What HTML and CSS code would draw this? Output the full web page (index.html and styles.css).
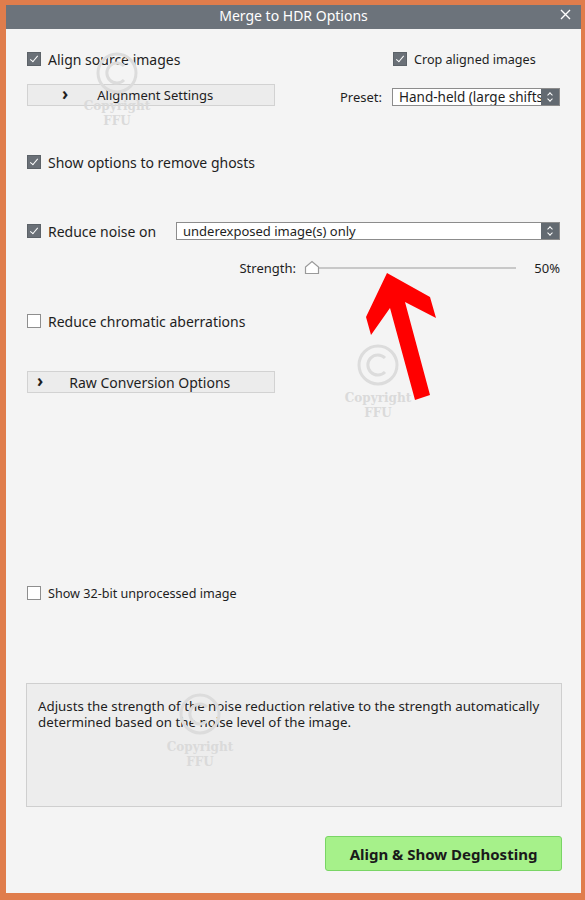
FILE: index.html
```html
<!DOCTYPE html>
<html lang="en">
<head>
    <meta charset="UTF-8">
    <meta name="viewport" content="width=device-width, initial-scale=1.0">
    <title>Merge to HDR Options</title>
    <link rel="stylesheet" href="styles.css">
</head>
<body>
    <div class="window">
        <div class="titlebar">
            <span class="title">Merge to HDR Options</span>
            <svg class="close" width="11" height="11" viewBox="0 0 11 11">
                <path d="M1 1 L10 10 M10 1 L1 10" stroke="#fff" stroke-width="1.4"/>
            </svg>
        </div>

        <div class="content">
            <!-- Alignment -->
            <div class="align-grid">
                <label class="check"><span class="box checked"></span>Align source images</label>
                <span></span>
                <label class="check small"><span class="box checked"></span>Crop aligned images</label>

                <div class="bar bar-align"><span class="chev">&#x203A;</span>Alignment Settings</div>
                <span class="preset-label">Preset:</span>
                <div class="select">
                    <span class="select-text">Hand-held (large shifts)</span>
                    <span class="spin"></span>
                </div>
            </div>

            <label class="check row-ghosts"><span class="box checked"></span>Show options to remove ghosts</label>

            <!-- Noise -->
            <div class="noise-row">
                <label class="check"><span class="box checked"></span>Reduce noise on</label>
                <div class="select wide">
                    <span class="select-text">underexposed image(s) only</span>
                    <span class="spin"></span>
                </div>
            </div>

            <div class="strength-row">
                <span class="strength-label">Strength:</span>
                <div class="slider">
                    <span class="track"></span>
                    <svg class="thumb" width="16" height="15" viewBox="0 0 16 15">
                        <path d="M1.5 13.5 V7 L8 1.5 L14.5 7 V13.5 Z" fill="#fff" stroke="#9a9a9a" stroke-width="1.2"/>
                    </svg>
                </div>
                <span class="pct">50%</span>
            </div>

            <label class="check row-chroma"><span class="box"></span>Reduce chromatic aberrations</label>

            <div class="bar bar-raw"><span class="chev">&#x203A;</span>Raw Conversion Options</div>

            <label class="check small row-32"><span class="box"></span>Show 32-bit unprocessed image</label>

            <div class="desc">
                Adjusts the strength of the noise reduction relative to the strength automatically
                determined based on the noise level of the image.
            </div>

            <div class="actions">
                <button class="go">Align &amp; Show Deghosting</button>
            </div>
        </div>

        <!-- watermarks -->
        <div class="mark mark-1">
            <svg class="ring" width="44" height="44" viewBox="0 0 44 44">
                <circle cx="22" cy="22" r="19" fill="none" stroke="#dcdcdc" stroke-width="3"/>
                <path d="M29 15 A10 10 0 1 0 29 29" fill="none" stroke="#dcdcdc" stroke-width="3"/>
            </svg>
            <span>Copyright</span>
            <span>FFU</span>
        </div>
        <div class="mark mark-2">
            <svg class="ring" width="44" height="44" viewBox="0 0 44 44">
                <circle cx="22" cy="22" r="19" fill="none" stroke="#dcdcdc" stroke-width="3"/>
                <path d="M29 15 A10 10 0 1 0 29 29" fill="none" stroke="#dcdcdc" stroke-width="3"/>
            </svg>
            <span>Copyright</span>
            <span>FFU</span>
        </div>
        <div class="mark mark-3">
            <svg class="ring" width="44" height="44" viewBox="0 0 44 44">
                <circle cx="22" cy="22" r="19" fill="none" stroke="#dcdcdc" stroke-width="3"/>
                <path d="M29 15 A10 10 0 1 0 29 29" fill="none" stroke="#dcdcdc" stroke-width="3"/>
            </svg>
            <span>Copyright</span>
            <span>FFU</span>
        </div>

        <!-- red pointer arrow -->
        <svg class="arrow" width="585" height="900" viewBox="0 0 585 900">
            <polygon points="387,273 430,297 436,318 405,302 430,395 415,400 390,308 371,335 366,317" fill="#ff0000"/>
        </svg>
    </div>
</body>
</html>
```

FILE: styles.css
```css
/* Photoshop style dialog */
body {
    margin: 0;
    background: #e07d4c;
    font-family: "Noto Sans", "Liberation Sans", sans-serif;
    color: #1e1e1e;
}

.window {
    position: relative;
    margin: 5px 4px 0 6px;
    height: 888px;
    background: #f4f4f4;
}

.titlebar {
    height: 24px;
    background: #6c737b;
    color: #fff;
    display: flex;
    align-items: center;
    justify-content: center;
    position: relative;
}

.title {
    font-size: 14px;
    margin-top: -3px;
}

.close {
    position: absolute;
    right: 10px;
    top: 4px;
}

.content {
    padding: 22px 21px 0 21px;
    display: flex;
    flex-direction: column;
}

.check {
    display: flex;
    align-items: center;
    height: 16px;
    font-size: 14px;
}

.check.small {
    font-size: 12.6px;
}

.box {
    width: 12px;
    height: 12px;
    border: 1px solid #8e8e8e;
    background: #fff;
    margin-right: 7px;
    flex: none;
    position: relative;
}

.box.checked {
    background: #6a7077;
    border-color: #5c6268;
}

.box.checked::after {
    content: "";
    position: absolute;
    left: 4px;
    top: 1px;
    width: 3px;
    height: 7px;
    border: solid #fff;
    border-width: 0 1.5px 1.5px 0;
    transform: rotate(40deg);
}

.align-grid {
    display: grid;
    grid-template-columns: 1fr auto 168px;
    grid-template-rows: 16px 22px;
    row-gap: 17px;
    align-items: center;
}

.align-grid .check.small {
    margin-left: 1px;
}

.bar {
    height: 20px;
    width: 246px;
    background: #ececec;
    border: 1px solid #d2d2d2;
    display: flex;
    align-items: center;
    font-size: 13.5px;
}

.chev {
    font-size: 17px;
    font-weight: bold;
    line-height: 1;
    margin-top: -3px;
}

.bar-align {
    font-size: 13px;
}

.bar-align .chev {
    margin-left: 34px;
    margin-right: 29px;
}

.bar-raw {
    font-size: 14px;
}

.bar-raw .chev {
    margin-left: 9px;
    margin-right: 26px;
}

.preset-label {
    font-size: 13px;
    margin-right: 10px;
    margin-top: 4px;
}

.select {
    height: 16px;
    border: 1px solid #8c8c8c;
    background: #fff;
    display: flex;
    align-items: center;
    overflow: hidden;
    font-size: 13.5px;
    position: relative;
    margin-top: 3px;
}

.select-text {
    flex: 1;
    white-space: nowrap;
    overflow: hidden;
    padding-left: 6px;
}

.spin {
    width: 18px;
    height: 16px;
    background: #636a71;
    flex: none;
    position: relative;
}

.spin::before,
.spin::after {
    content: "";
    position: absolute;
    left: 7px;
    width: 3px;
    height: 3px;
    border: solid #fff;
    border-width: 1px 0 0 1px;
}

.spin::before {
    top: 4px;
    transform: rotate(45deg);
}

.spin::after {
    top: 8px;
    transform: rotate(225deg);
}

.row-ghosts {
    margin-top: 48px;
}

.noise-row {
    margin-top: 52px;
    display: flex;
    align-items: center;
    height: 18px;
}

.noise-row .check {
    width: 149px;
}

.select.wide {
    flex: 1;
    margin-top: 0;
    font-size: 13px;
}

.strength-row {
    margin-top: 20px;
    height: 16px;
    display: flex;
    align-items: center;
    justify-content: flex-end;
    font-size: 13px;
}

.strength-label {
    margin-right: 8px;
}

.slider {
    position: relative;
    width: 215px;
    height: 16px;
}

.track {
    position: absolute;
    left: 5px;
    right: 3px;
    top: 7px;
    height: 2px;
    background: #c8c8c8;
}

.thumb {
    position: absolute;
    left: 0;
    top: 0;
}

.pct {
    width: 41px;
    text-align: right;
}

.row-chroma {
    margin-top: 37px;
}

.bar-raw {
    margin-top: 42px;
}

.row-32 {
    margin-top: 192px;
}

.desc {
    margin-top: 82px;
    margin-left: -1px;
    margin-right: -2px;
    height: 108px;
    background: #ededed;
    border: 1px solid #cfcfcf;
    padding: 14px 12px 0 11px;
    font-size: 13.3px;
    line-height: 16px;
}

.actions {
    margin-top: 29px;
    margin-right: -2px;
    display: flex;
    justify-content: flex-end;
}

.go {
    width: 237px;
    height: 35px;
    background: #a6f18a;
    border: 1px solid #79d565;
    border-radius: 3px;
    font-family: inherit;
    font-size: 15px;
    font-weight: bold;
    color: #1a1a1a;
}

.mark {
    position: absolute;
    width: 90px;
    display: flex;
    flex-direction: column;
    align-items: center;
    font-family: "DejaVu Serif", serif;
    font-weight: bold;
    font-size: 12px;
    line-height: 15px;
    color: #dadada;
    pointer-events: none;
}

.ring {
    margin-bottom: 4px;
}

.mark-1 {
    left: 66px;
    top: 46px;
}

.mark-2 {
    left: 327px;
    top: 338px;
}

.mark-3 {
    left: 149px;
    top: 687px;
}

.arrow {
    position: absolute;
    left: -6px;
    top: -5px;
    pointer-events: none;
}
```
